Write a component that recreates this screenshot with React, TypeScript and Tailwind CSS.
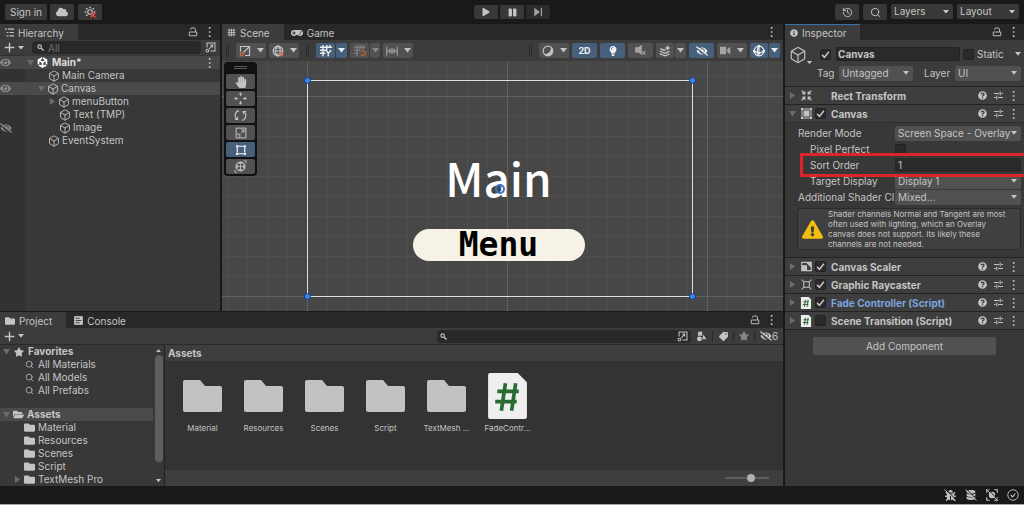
import type { ReactNode } from "react";
import { Box, History, Search } from "lucide-react";
import {
  FaBug,
  FaCloud,
  FaDatabase,
  FaExclamationTriangle,
  FaEye,
  FaEyeSlash,
  FaFolder,
  FaFolderOpen,
  FaGamepad,
  FaHandPaper,
  FaInfoCircle,
  FaLightbulb,
  FaPause,
  FaPlay,
  FaQuestionCircle,
  FaStar,
  FaTag,
} from "react-icons/fa";
import { FaUnity } from "react-icons/fa6";
import clsx from "clsx";

const Glyph = ({ children, className = "size-3" }: { children: ReactNode; className?: string }) => (
  <svg viewBox="0 0 16 16" fill="none" stroke="currentColor" strokeWidth="1.5" className={clsx("shrink-0", className)} aria-hidden="true">
    {children}
  </svg>
);

const Caret = ({ className = "w-[7px]" }: { className?: string }) => (
  <svg viewBox="0 0 8 5" fill="currentColor" className={clsx("shrink-0", className)} aria-hidden="true">
    <path d="M0 0h8L4 5z" />
  </svg>
);

const Foldout = ({ open = false }: { open?: boolean }) => (
  <svg viewBox="0 0 8 8" className="size-[7px] shrink-0 fill-[#6c6c6c]" aria-hidden="true">
    <path d={open ? "M0 1h8L4 7.500z" : "M1 0v8l6-4z"} />
  </svg>
);

const Kebab = () => (
  <button aria-label="More options" className="flex w-[7px] shrink-0 justify-center">
    <svg viewBox="0 0 4 12" className="h-[10px] fill-[#c4c4c4]">
      <path d="M1 0h2v2H1zM1 5h2v2H1zM1 10h2v2H1z" />
    </svg>
  </button>
);

const LockButton = () => (
  <button aria-label="Lock">
    <Glyph className="size-[10px]">
      <path d="M4 4.500V4a2.500 2.500 0 0 1 2.500-2.500h3A2.500 2.500 0 0 1 12 4v4" />
      <path d="M2 8h12v6H2z" />
    </Glyph>
  </button>
);

const ScriptIcon = ({ className }: { className: string }) => (
  <svg viewBox="0 0 38 45" className={clsx("shrink-0", className)} aria-hidden="true">
    <path d="M2 0h27l9 9v34a2 2 0 0 1-2 2H2a2 2 0 0 1-2-2V2a2 2 0 0 1 2-2z" fill="#efefef" />
    <path d="M17 10l-4 27M27 10l-4 27M9 18h21M7 28h21" stroke="#2a6b31" strokeWidth="3.600" fill="none" />
  </svg>
);

const PickerIcon = () => (
  <Glyph className="size-[11px]">
    <path d="M3 8V1.500h11.500V13H8M6 10l5-5M7.500 4.500H11V8" />
    <circle cx="3.500" cy="12.500" r="2" />
  </Glyph>
);

const SearchMark = () => (
  <Glyph className="size-[7px]">
    <circle cx="6" cy="6" r="4" strokeWidth="2.500" />
    <path d="M9 9l6 6" strokeWidth="3" />
  </Glyph>
);

const Tab = ({ icon, label, active = false, focus = false }: { icon: ReactNode; label: string; active?: boolean; focus?: boolean }) => (
  <button
    role="tab"
    aria-selected={active}
    className={clsx(
      "flex items-center gap-1 border-t pr-[14px] pl-[5px]",
      active ? "bg-[#3c3c3c]" : "",
      focus ? "border-[#3a72a8]" : active ? "border-[#3c3c3c]" : "border-transparent",
    )}
  >
    {icon}
    {label}
  </button>
);

const TopBar = () => (
  <header className="flex h-6 shrink-0 items-center bg-[#191919] px-[5px]">
    <div className="flex flex-1 gap-[3px]">
      <button className="h-4 w-[42px] rounded-xs bg-[#383838]">Sign in</button>
      <button aria-label="Cloud" className="flex h-4 w-6 items-center justify-center rounded-xs bg-[#383838]"><FaCloud className="size-3" /></button>
      <button aria-label="Version control" className="ml-px flex h-4 w-6 items-center justify-center rounded-xs bg-[#383838]">
        <Glyph className="size-3">
          <circle cx="8" cy="8" r="3" />
          <path d="M8 1v2M3 3l1.500 1.500M1 8h2M13 3l-1.500 1.500M13 8h2M3 13l1.500-1.500" strokeWidth="2" />
          <path d="M9 9l6 6M15 9l-6 6" stroke="#f04c41" strokeWidth="2.200" />
        </Glyph>
      </button>
    </div>
    <div className="flex gap-0.5">
      <button aria-label="Play" className="flex h-[14px] w-6 items-center justify-center rounded-l-xs bg-[#383838]"><FaPlay className="size-2" /></button>
      <button aria-label="Pause" className="flex h-[14px] w-6 items-center justify-center bg-[#383838]"><FaPause className="size-[9px]" /></button>
      <button aria-label="Step" className="flex h-[14px] w-6 items-center justify-center rounded-r-xs bg-[#2b2b2b] text-[#a0a0a0]">
        <Glyph className="size-[10px]"><path d="M2 1l9 7-9 7z" fill="currentColor" stroke="none" /><path d="M13.500 1v14" strokeWidth="2" /></Glyph>
      </button>
    </div>
    <div className="flex flex-1 justify-end gap-1">
      <button aria-label="Undo history" className="flex h-4 w-6 items-center justify-center rounded-xs bg-[#383838]"><History className="size-[11px]" /></button>
      <button aria-label="Search" className="flex h-4 w-6 items-center justify-center rounded-xs bg-[#383838]"><Search className="size-[11px]" /></button>
      <Dropdown label="Layers" options={["Layers", "Everything"]} className="w-[62px] bg-[#383838]" hideLabel />
      <Dropdown label="Layout" options={["Layout", "Default"]} className="w-[62px] bg-[#383838]" hideLabel />
    </div>
  </header>
);

const Dropdown = ({ label, options, className, hideLabel = false, id }: { label: string; options: string[]; className?: string; hideLabel?: boolean; id?: string }) => (
  <div className={clsx("relative flex h-[15px] min-w-0 items-center rounded-xs", className)}>
    <select id={id} aria-label={hideLabel ? label : undefined} className="h-full w-full min-w-0 appearance-none bg-transparent pr-2 pl-[3px] leading-[15px] outline-none">
      {options.map((o) => <option key={o}>{o}</option>)}
    </select>
    <Caret className="pointer-events-none absolute right-1 w-[6px]" />
  </div>
);

const treeRows = [
  { name: "Main Camera", pad: "pl-[23px]" },
  { name: "Canvas", pad: "pl-[13px]", open: true, eye: "on", selected: true },
  { name: "menuButton", pad: "pl-6", open: false },
  { name: "Text (TMP)", pad: "pl-[34px]" },
  { name: "Image", pad: "pl-[34px]", eye: "off" },
  { name: "EventSystem", pad: "pl-[23px]" },
];

const Hierarchy = () => (
  <section className="flex w-[222px] shrink-0 flex-col border-r-2 border-[#191919] bg-[#383838]">
    <div className="flex h-4 items-stretch bg-[#282828]">
      <Tab
        active
        label="Hierarchy"
        icon={<Glyph className="size-[9px]"><path d="M0 2h3M5 2h11M3 8h3M8 8h8M3 14h3M8 14h8" strokeWidth="1.800" /></Glyph>}
      />
      <div className="ml-auto flex items-center gap-2 pr-[7px]"><LockButton /><Kebab /></div>
    </div>
    <div className="flex h-[15px] items-center gap-1 bg-[#3c3c3c] px-1">
      <button aria-label="Create" className="flex items-center gap-[3px]">
        <Glyph className="size-[11px]"><path d="M8 1v14M1 8h14" strokeWidth="2" /></Glyph>
        <Caret className="w-[6px]" />
      </button>
      <label className="ml-1 flex h-[13px] min-w-0 flex-1 items-center gap-1 rounded-sm bg-[#292929] pl-[5px]">
        <SearchMark />
        <input aria-label="Search hierarchy" placeholder="All" className="w-full min-w-0 bg-transparent outline-none placeholder:text-[#6e6e6e]" />
      </label>
      <button aria-label="Open search"><PickerIcon /></button>
    </div>
    <ul className="flex-1 bg-linear-to-r from-[#323232] from-[25px] to-[#383838] to-[25px] pt-px leading-[13px]">
      <li className="flex h-[13px] items-center bg-[#474747] pr-[7px] font-bold text-[#dedede]">
        <span className="flex w-[27px]"><FaEye className="size-[11px] text-[#8c8c8c]" /></span>
        <Foldout open />
        <FaUnity className="mr-1 ml-[3px] size-[11px] text-white" />
        <span className="flex-1">Main*</span>
        <Kebab />
      </li>
      {treeRows.map((r) => (
        <li key={r.name} className={clsx("flex h-[13px] items-center", r.selected && "bg-[#4a4a4a]")}>
          <span className="flex w-[25px] shrink-0">
            {r.eye === "on" && <FaEye className="size-[11px] text-[#8c8c8c]" />}
            {r.eye === "off" && <FaEyeSlash className="size-3 text-[#8c8c8c]" />}
          </span>
          <span className={clsx("flex items-center gap-0.5", r.pad)}>
            {r.open !== undefined && <Foldout open={r.open} />}
            <Box className="size-3" strokeWidth={1.8} />
            {r.name}
          </span>
        </li>
      ))}
    </ul>
  </section>
);

const ToolButton = ({ label, children, on = false, caret = false, width = "w-[25px]" }: { label: string; children: ReactNode; on?: boolean; caret?: boolean; width?: string }) => (
  <button
    aria-label={label}
    className={clsx("flex h-[15px] shrink-0 items-center justify-center gap-1.5 rounded-xs", width, on ? "bg-[#46607c] text-[#eeeeee]" : "bg-[#515151]")}
  >
    {children}
    {caret && <Caret />}
  </button>
);

const Grip = () => <span className="mx-1 h-3 w-[3px] shrink-0 border-x border-[#292929]" />;

const GridIcon = ({ className }: { className?: string }) => (
  <Glyph className={className}><path d="M4 1v14M8 1v14M12 1v14M1 4h14M1 8h14M1 12h14" /></Glyph>
);

const SceneToolbar = () => (
  <div className="flex h-[21px] shrink-0 items-center gap-[3px] bg-[#3c3c3c] pr-[3px]">
    <Grip />
    <ToolButton label="Pivot" caret width="w-[30px]">
      <Glyph><path d="M2 9V2h12v12H8M6 10l7-7" /><circle cx="3.500" cy="12.500" r="2" stroke="#e06a3b" /></Glyph>
    </ToolButton>
    <ToolButton label="Global" caret width="w-[30px]">
      <Glyph><circle cx="8" cy="8" r="6.500" /><ellipse cx="8" cy="8" rx="3" ry="6.500" /><path d="M1.500 8h13M3 4h10M3 12h6" /><circle cx="12.500" cy="12.500" r="2" stroke="#e06a3b" /></Glyph>
    </ToolButton>
    <Grip />
    <div className="flex gap-px">
      <ToolButton label="Grid" on width="w-[19px]">
        <Glyph><path d="M4 0v15M9 0v7M13 0v4M0 3h16M0 7h8M0 11h7M8 7l3 4 4-4M11 11v4" strokeWidth="1.800" /></Glyph>
      </ToolButton>
      <ToolButton label="Grid options" on width="w-[11px]"><Caret /></ToolButton>
    </div>
    <div className="flex gap-px text-[#888888]">
      <ToolButton label="Snap" width="w-[19px]">
        <Glyph><path d="M4 0v15M8 0v7M12 0v6M0 3h15M0 7h8M0 11h6" /><path d="M9 8h3.500a2.700 2.700 0 0 1 0 5.500H9" stroke="#b85c3c" strokeWidth="2" /></Glyph>
      </ToolButton>
      <ToolButton label="Snap options" width="w-[10px]"><Caret /></ToolButton>
    </div>
    <ToolButton label="Increment" caret width="w-[30px]">
      <Glyph className="size-3 text-[#a4a4a4]"><path d="M1 2v12M15 2v12M5 5v6M8 4v8M11 5v6M1 8h14" /></Glyph>
    </ToolButton>
    <div className="ml-auto flex items-center gap-[3px]">
      <Grip />
      <ToolButton label="Draw mode" caret width="w-[30px]">
        <Glyph><circle cx="8" cy="8" r="6.500" /><path d="M12.500 3.500a6.500 6.500 0 0 1-9 9 8 8 0 0 0 9-9z" fill="currentColor" /></Glyph>
      </ToolButton>
      <ToolButton label="2D" on><span className="text-[9px] font-bold">2D</span></ToolButton>
      <ToolButton label="Lighting" on><FaLightbulb className="size-[10px]" /></ToolButton>
      <ToolButton label="Audio">
        <Glyph className="size-[11px] text-[#a4a4a4]"><path d="M1 4h3v6H1zM5 4l4-3v12l-4-3z" fill="currentColor" /><path d="M10.500 9l4.500 5M15 9l-4.500 5" /></Glyph>
      </ToolButton>
      <div className="flex gap-px">
        <ToolButton label="Effects" width="w-[18px]">
          <Glyph><path d="M1 8l7 3 6-2.500M1 11.500l7 3 6-2.500M2 5l5 2 2-.5" strokeWidth="1.800" /><path d="M11.500 0l1.200 2.800L15.500 4l-2.800 1.200L11.500 8l-1.200-2.800L7.500 4l2.800-1.200z" fill="currentColor" stroke="none" /></Glyph>
        </ToolButton>
        <ToolButton label="Effect options" width="w-[11px]"><Caret /></ToolButton>
      </div>
      <ToolButton label="Visibility" on><FaEyeSlash className="size-3" /></ToolButton>
      <ToolButton label="Camera" caret width="w-[30px]">
        <Glyph className="size-[11px] text-[#a4a4a4]"><path d="M0 2.500h9v11H0zM10.500 6L15 2.500v11L10.500 10z" fill="currentColor" stroke="none" /></Glyph>
      </ToolButton>
      <div className="flex gap-px">
        <ToolButton label="Gizmos" on width="w-[18px]">
          <Glyph><circle cx="8" cy="8" r="6.500" /><path d="M8 1.500c-3 3-3 10 0 13M1.500 8c3 3 10 3 13 0M8 2v9" /><path d="M6.500 9.500h3v3h-3zM0 6.500h3v3H0zM13 6.500h3v3h-3zM6.500 0h3v3h-3z" fill="currentColor" stroke="none" /></Glyph>
        </ToolButton>
        <ToolButton label="Gizmo options" on width="w-[11px]"><Caret /></ToolButton>
      </div>
    </div>
  </div>
);

const tools = [
  { label: "Hand", icon: <FaHandPaper className="size-3" /> },
  { label: "Move", icon: <Glyph className="size-[13px]"><path d="M8 1v4M8 11v4M1 8h4M11 8h4M6 3l2-2 2 2M6 13l2 2 2-2M3 6L1 8l2 2M13 6l2 2-2 2" strokeWidth="1.200" /></Glyph> },
  { label: "Rotate", icon: <Glyph className="size-[13px]"><path d="M6 2a6.200 6.200 0 0 0-2 11M10 14a6.200 6.200 0 0 0 2-11M1 13h3.500V9.500M15 3h-3.500v3.500" strokeWidth="1.300" /></Glyph> },
  { label: "Scale", icon: <Glyph><path d="M1.500 9V1.500h13v13H7M1.500 9.500h5v5h-5zM8 8l4-4M8.500 4H12v3.500" strokeWidth="1.300" /></Glyph> },
  { label: "Rect", on: true, icon: <Glyph><path d="M3 5v6M13 5v6M5 3h6M5 13h6" /><path d="M1.500 1.500h3v3h-3zM11.500 1.500h3v3h-3zM1.500 11.500h3v3h-3zM11.500 11.500h3v3h-3z" fill="currentColor" stroke="none" /></Glyph> },
  { label: "Transform", icon: <Glyph className="size-[13px]"><circle cx="8" cy="8" r="5.500" /><path d="M8 3v10M3 8h10M6 5l2-2 2 2M6 11l2 2 2-2M5 6L3 8l2 2M11 6l2 2-2 2M12 1h3v3M4 15H1v-3" strokeWidth="1" /></Glyph> },
];

const Handle = ({ className }: { className: string }) => (
  <span className={clsx("absolute size-[7px] rounded-full border border-[#153c78] bg-[#3b83e6]", className)} />
);

const SceneCanvas = () => (
  <div className="relative flex-1 overflow-hidden bg-[#474747]">
    <svg className="absolute inset-0 h-full w-full" aria-hidden="true">
      <defs>
        <pattern id="minor" x="5" y="15" width="20" height="20" patternUnits="userSpaceOnUse">
          <path d="M.5 0v20M0 .5h20" stroke="#4e4e4e" fill="none" />
        </pattern>
        <pattern id="major" x="85" y="35" width="200" height="200" patternUnits="userSpaceOnUse">
          <path d="M.5 0v200M0 .5h200" stroke="#606060" fill="none" />
        </pattern>
      </defs>
      <rect width="100%" height="100%" fill="url(#minor)" />
      <rect width="100%" height="100%" fill="url(#major)" />
    </svg>
    <div className="absolute top-[19px] right-[90px] bottom-[14px] left-[85px] border border-[#dedede]">
      <Handle className="-top-1 -left-1" />
      <Handle className="-top-1 -right-1" />
      <Handle className="-bottom-1 -left-1" />
      <Handle className="-right-1 -bottom-1" />
      <div className="flex h-full flex-col items-center justify-end pr-[3px] pb-[35px]">
        <h1 className="mb-5 font-['Noto_Sans_CJK_JP','Noto_Sans',sans-serif] text-[46px] leading-[64px] font-medium text-white">Main</h1>
        <button className="h-8 w-[172px] rounded-full bg-[#f6f3e6] font-['DejaVu_Sans_Mono',monospace] text-[33px] leading-8 font-bold text-black">Menu</button>
      </div>
      <span className="absolute top-1/2 left-1/2 size-[10px] -translate-x-1/2 -translate-y-1/2 rounded-full border-2 border-[#3a72c4]" />
    </div>
    <div className="absolute top-px left-[2px] flex w-[33px] flex-col gap-[2px] rounded-sm bg-[#111111] px-[2px] pb-[2px]">
      <span className="mx-auto mt-1 mb-[3px] h-[3px] w-[13px] border-y border-[#5a5a5a]" />
      {tools.map((t) => (
        <button key={t.label} aria-label={t.label} className={clsx("flex h-[15px] items-center justify-center rounded-xs", t.on ? "bg-[#46607c] text-white" : "bg-[#515151]")}>
          {t.icon}
        </button>
      ))}
    </div>
  </div>
);

const Scene = () => (
  <section className="flex min-w-0 flex-1 flex-col">
    <div className="flex h-4 bg-[#282828]">
      <Tab active label="Scene" icon={<GridIcon className="size-[9px]" />} />
      <Tab label="Game" icon={<FaGamepad className="ml-[2px] size-3" />} />
      <div className="ml-auto flex items-center pr-[8px]"><Kebab /></div>
    </div>
    <SceneToolbar />
    <SceneCanvas />
  </section>
);

const favorites = ["All Materials", "All Models", "All Prefabs"];
const folders = ["Material", "Resources", "Scenes", "Script", "TextMesh Pro"];

const FolderArt = () => (
  <svg viewBox="0 0 39 32" className="w-[39px] fill-[#c2c2c2]" aria-hidden="true">
    <path d="M2 0h15l5 6h15a2 2 0 0 1 2 2v22a2 2 0 0 1-2 2H2a2 2 0 0 1-2-2V2a2 2 0 0 1 2-2z" />
  </svg>
);

const Project = () => (
  <section className="flex shrink-0 flex-col border-t border-[#191919]">
    <div className="flex h-4 bg-[#282828]">
      <Tab active label="Project" icon={<FaFolder className="size-[10px]" />} />
      <Tab label="Console" icon={<Glyph className="ml-[3px] size-[9px]"><path d="M1 1h14v14H1z" fill="currentColor" /><path d="M3 4h7M3 8h10M3 12h7" stroke="#282828" /></Glyph>} />
      <div className="ml-auto flex items-center gap-2 pr-[8px]"><LockButton /><Kebab /></div>
    </div>
    <div className="flex h-[17px] items-center border-b border-[#2a2a2a] bg-[#3c3c3c] pl-1">
      <button aria-label="Create asset" className="flex items-center gap-[3px]">
        <Glyph className="size-[11px]"><path d="M8 1v14M1 8h14" strokeWidth="2" /></Glyph>
        <Caret className="w-[6px]" />
      </button>
      <div className="ml-auto flex h-[13px] w-[254px] items-center gap-1 rounded-sm bg-[#292929] px-[3px]">
        <SearchMark />
        <input aria-label="Search project" className="min-w-0 flex-1 bg-transparent outline-none" />
        <button aria-label="Open search"><PickerIcon /></button>
      </div>
      <button aria-label="Filter by type" className="flex w-[22px] justify-center border-r border-[#2a2a2a]">
        <Glyph className="size-[11px]"><path d="M3 1h6v6H3zM11 5l4 7H9z" fill="currentColor" stroke="none" /><circle cx="5" cy="11.500" r="3.500" fill="currentColor" stroke="none" /></Glyph>
      </button>
      <button aria-label="Filter by label" className="flex w-[21px] justify-center border-r border-[#2a2a2a]"><FaTag className="size-[9px] rotate-90" /></button>
      <button aria-label="Save search" className="flex w-[21px] justify-center border-r border-[#2a2a2a]"><FaStar className="size-[10px] text-[#878787]" /></button>
      <button aria-label="Hidden packages" className="flex w-[28px] items-center justify-center"><FaEyeSlash className="size-3" />6</button>
    </div>
    <div className="flex">
      <div className="flex w-[165px] shrink-0 border-r border-[#222222] bg-[#383838]">
        <ul className="min-w-0 flex-1 leading-[13px]">
          <li className="flex h-[13px] items-center gap-1 pl-[3px] font-bold"><Foldout open /><FaStar className="size-[10px]" />Favorites</li>
          {favorites.map((f) => (
            <li key={f} className="flex h-[13px] items-center gap-1 pl-[25px]"><Search className="size-[9px]" />{f}</li>
          ))}
          <li className="mt-[11px] flex h-[13px] items-center gap-[3px] bg-[#4a4a4a] pl-[3px] font-bold"><Foldout open /><FaFolderOpen className="size-[11px]" />Assets</li>
          {folders.map((f) => (
            <li key={f} className={clsx("flex h-[13px] items-center gap-[3px]", f === "TextMesh Pro" ? "pl-[14px]" : "pl-6")}>
              {f === "TextMesh Pro" && <Foldout />}
              <FaFolder className="size-[11px]" />
              {f}
            </li>
          ))}
        </ul>
        <div className="flex w-[11px] flex-col items-center py-1">
          <Caret className="w-[5px] rotate-180" />
          <span className="mt-[3px] h-[107px] w-2 rounded-full bg-[#5e5e5e]" />
          <Caret className="mt-auto w-[5px]" />
        </div>
      </div>
      <div className="flex min-w-0 flex-1 flex-col bg-[#333333]">
        <h2 className="h-4 bg-[#3e3e3e] px-[3px] leading-4 font-bold">Assets</h2>
        <ul className="flex flex-1 px-[7px] pt-3 text-[8px] leading-3">
          {folders.map((f) => (
            <li key={f} className="flex w-[61px] flex-col items-center">
              <span className="flex h-[46px] items-center"><FolderArt /></span>
              <span className="mt-[3px]">{f === "TextMesh Pro" ? "TextMesh ..." : f}</span>
            </li>
          ))}
          <li className="flex w-[61px] flex-col items-center">
            <ScriptIcon className="h-[46px] w-[39px]" />
            <span className="mt-[3px]">FadeContr...</span>
          </li>
        </ul>
        <div className="flex h-4 items-center justify-end bg-[#3e3e3e] pr-[14px]">
          <input
            type="range"
            aria-label="Icon size"
            defaultValue={60}
            className="h-[2px] w-[44px] appearance-none bg-[#5e5e5e] [&::-webkit-slider-thumb]:size-2 [&::-webkit-slider-thumb]:appearance-none [&::-webkit-slider-thumb]:rounded-full [&::-webkit-slider-thumb]:bg-[#b0b0b0]"
          />
        </div>
      </div>
    </div>
  </section>
);

const Check = ({ label, checked = false, id }: { label?: string; checked?: boolean; id?: string }) => (
  <span className="relative flex size-[11px] shrink-0">
    <input id={id} type="checkbox" aria-label={label} defaultChecked={checked} className="peer size-full appearance-none rounded-xs border border-[#222222] bg-[#2a2a2a]" />
    <Glyph className="pointer-events-none absolute inset-0 hidden size-[11px] peer-checked:block"><path d="M3 8.500l3.500 3.500L13 4" strokeWidth="2.200" /></Glyph>
  </span>
);

const ComponentHeader = ({ name, icon, open, checked, accent = false }: { name: string; icon: ReactNode; open?: boolean; checked?: boolean; accent?: boolean }) => (
  <div className="flex h-[18px] items-center border-t border-[#222222] bg-[#3e3e3e] pr-[7px] pl-1">
    <Foldout open={open} />
    <span className="mr-[3px] ml-1 flex w-3 justify-center">{icon}</span>
    <span className="w-4">{checked !== undefined && <Check label={`Enable ${name}`} checked={checked} />}</span>
    <h3 className={clsx("flex-1 font-bold", accent && "text-[#7ba3dd]")}>{name}</h3>
    <div className="flex items-center gap-[7px]">
      <button aria-label="Help"><FaQuestionCircle className="size-[9px]" /></button>
      <button aria-label="Presets"><Glyph className="size-[9px]"><path d="M0 4.500h9M13 4.500h3M11 1v7M0 11.500h3M7 11.500h9M5 8v7" strokeWidth="1.800" /></Glyph></button>
      <Kebab />
    </div>
  </div>
);

const Field = ({ label, id, indent = false, children }: { label: string; id: string; indent?: boolean; children: ReactNode }) => (
  <div className={clsx("relative flex h-4 items-center pr-[3px]", indent ? "pl-[25px]" : "pl-[13px]")}>
    <label htmlFor={id} className={clsx("shrink-0 whitespace-nowrap", indent ? "w-[85px]" : "w-[97px]")}>{label}</label>
    {children}
  </div>
);

const Inspector = () => (
  <aside className="flex w-[241px] shrink-0 flex-col border-l-2 border-[#191919] bg-[#383838]">
    <div className="flex h-4 bg-[#282828]">
      <Tab active focus label="Inspector" icon={<FaInfoCircle className="size-2" />} />
      <div className="ml-auto flex items-center gap-2 pr-[7px]"><LockButton /><Kebab /></div>
    </div>
    <div className="flex h-[46px] gap-2 bg-[#3c3c3c] pt-[6px] pr-[3px] pl-1">
      <button aria-label="Object icon" className="flex w-5 items-end self-start">
        <Box className="size-[18px] shrink-0" strokeWidth={1.5} />
        <Caret className="w-[5px]" />
      </button>
      <div className="flex min-w-0 flex-1 flex-col gap-[3px]">
        <div className="flex h-4 items-center pl-[3px]">
          <Check label="Active" checked />
          <input aria-label="Object name" defaultValue="Canvas" className="ml-[5px] h-[14px] min-w-0 flex-1 rounded-xs border border-[#222222] bg-[#2a2a2a] px-px font-bold outline-none" />
          <span className="ml-[3px] flex w-[58px] items-center gap-[3px]">
            <Check id="static" />
            <label htmlFor="static">Static</label>
            <Caret className="ml-auto w-[6px]" />
          </span>
        </div>
        <div className="flex h-4 items-center">
          <label htmlFor="tag" className="w-[22px]">Tag</label>
          <Dropdown id="tag" label="Tag" options={["Untagged", "Player"]} className="w-[74px] bg-[#515151]" />
          <label htmlFor="layer" className="ml-auto w-[31px]">Layer</label>
          <Dropdown id="layer" label="Layer" options={["UI", "Default"]} className="w-[66px] bg-[#515151]" />
        </div>
      </div>
    </div>
    <ComponentHeader name="Rect Transform" icon={<Glyph className="size-[11px]"><path d="M1 1l4 4M15 1l-4 4M1 15l4-4M15 15l-4-4M5.500 2v3.500H2M10.500 2v3.500H14M2 10.500h3.500V14M14 10.500h-3.500V14" strokeWidth="1.800" /></Glyph>} />
    <ComponentHeader name="Canvas" open checked icon={<Glyph className="size-[11px]"><path d="M4.500 4.500h7v7h-7z" fill="currentColor" /><path d="M1.500 3v10M14.500 3v10M3 1.500h10M3 14.500h10" /><path d="M0 0h3v3H0zM13 0h3v3h-3zM0 13h3v3H0zM13 13h3v3h-3z" fill="currentColor" stroke="none" /></Glyph>} />
    <div className="border-t border-[#2e2e2e] pt-[2px] pb-[7px]">
      <Field label="Render Mode" id="render"><Dropdown id="render" label="Render Mode" options={["Screen Space - Overlay", "World Space"]} className="flex-1 bg-[#515151]" /></Field>
      <Field label="Pixel Perfect" id="pixel" indent><Check id="pixel" /></Field>
      <Field label="Sort Order" id="sort" indent>
        <input id="sort" defaultValue="1" className="h-[14px] min-w-0 flex-1 rounded-xs bg-[#2a2a2a] px-[3px] outline-none" />
        <span className="pointer-events-none absolute -top-1 right-0 -bottom-1 left-[15px] z-10 border-[3px] border-r-0 border-[#dc2528]" />
      </Field>
      <Field label="Target Display" id="display" indent><Dropdown id="display" label="Target Display" options={["Display 1", "Display 2"]} className="flex-1 bg-[#515151]" /></Field>
      <Field label="Additional Shader Cl" id="shader"><Dropdown id="shader" label="Channels" options={["Mixed...", "Nothing"]} className="flex-1 bg-[#515151]" /></Field>
      <div className="mt-[3px] mr-[3px] ml-3 flex items-center gap-[5px] rounded-xs border border-[#2a2a2a] bg-[#404040] pl-1 text-[8px] leading-[10px]">
        <FaExclamationTriangle className="size-[21px] shrink-0 text-[#f5bd0b]" />
        <p className="whitespace-nowrap">
          Shader channels Normal and Tangent are most<br />
          often used with lighting, which an Overlay<br />
          canvas does not support. Its likely these<br />
          channels are not needed.
        </p>
      </div>
    </div>
    <ComponentHeader name="Canvas Scaler" checked icon={<Glyph className="size-[11px]"><path d="M1 2h14v12H1z" /><path d="M2 7h6v6H2zM9 3h5v5z" fill="currentColor" /></Glyph>} />
    <ComponentHeader name="Graphic Raycaster" checked icon={<Glyph className="size-[11px]"><path d="M4 4h8v8H4zM1 1l3 3M15 1l-3 3M1 15l3-3M15 15l-3-3" /></Glyph>} />
    <ComponentHeader name="Fade Controller (Script)" checked accent icon={<ScriptIcon className="size-3" />} />
    <ComponentHeader name="Scene Transition (Script)" checked={false} icon={<ScriptIcon className="size-3" />} />
    <div className="flex-1 border-t border-[#222222] pt-[7px]">
      <button className="mx-auto block h-[18px] w-[183px] rounded-xs bg-[#515151]">Add Component</button>
    </div>
  </aside>
);

const Slash = ({ label, children }: { label: string; children: ReactNode }) => (
  <button className="relative flex size-3 items-center justify-center" aria-label={label}>
    {children}
    <svg viewBox="0 0 12 12" className="absolute inset-0" fill="none"><path d="M1.500 0l10.500 10.500" stroke="#191919" /><path d="M.5 .5l11 11" stroke="#c4c4c4" /></svg>
  </button>
);

export default function App() {
  return (
    <div className="flex min-h-screen flex-col border-b border-[#a8a8a8] bg-[#191919] font-['Inter',sans-serif] text-[10px] leading-[14px] text-[#c4c4c4]">
      <TopBar />
      <main className="flex flex-1">
        <div className="flex min-w-0 flex-1 flex-col">
          <div className="flex flex-1">
            <Hierarchy />
            <Scene />
          </div>
          <Project />
        </div>
        <Inspector />
      </main>
      <footer className="flex h-[18px] shrink-0 items-center justify-end gap-[9px] px-[5px]">
        <Slash label="Debugger"><FaBug className="size-[11px]" /></Slash>
        <Slash label="Cache server"><FaDatabase className="size-[10px]" /></Slash>
        <Slash label="Auto lighting"><Glyph><path d="M1 5V1h4M11 1h4v4M15 11v4h-4M5 15H1v-4" /><circle cx="8" cy="8" r="3.500" fill="currentColor" /></Glyph></Slash>
        <button aria-label="Tasks complete"><Glyph><circle cx="8" cy="8" r="7" strokeWidth="1.200" /><path d="M5 8l2.500 2.500L11 6" /></Glyph></button>
      </footer>
    </div>
  );
}
